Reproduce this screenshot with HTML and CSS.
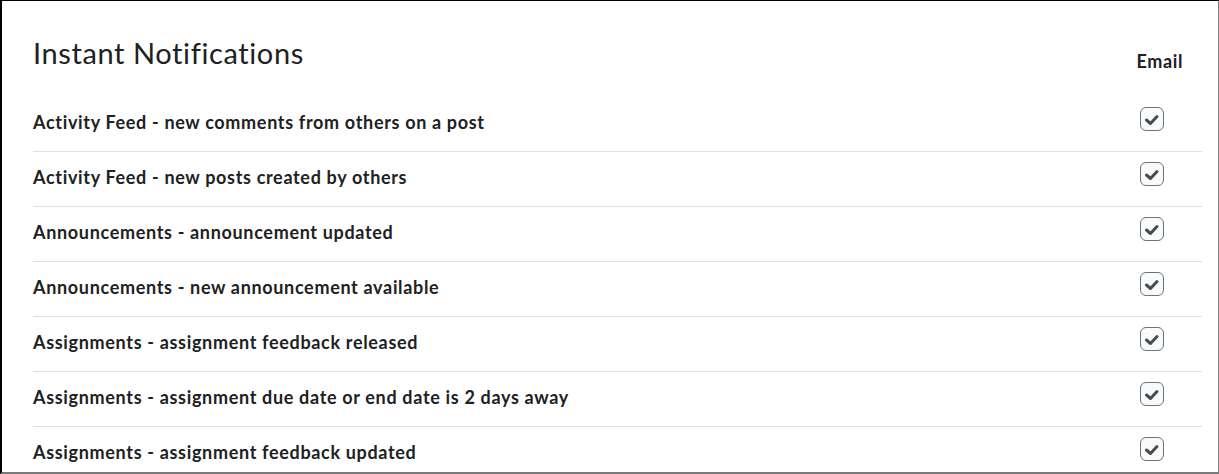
FILE: index.html
```html
<!DOCTYPE html>
<html lang="en">
<head>
    <meta charset="UTF-8">
    <meta name="viewport" content="width=device-width, initial-scale=1.0">
    <title>Instant Notifications</title>
    <link rel="stylesheet" href="styles.css">
</head>
<body>
    <div class="frame">
        <div class="header">
            <h1 class="title">Instant Notifications</h1>
            <div class="col-head">Email</div>
        </div>

        <div class="row">
            <div class="label">Activity Feed - new comments from others on a post</div>
            <div class="check"><svg viewBox="0 0 22 22"><polyline points="5.5,12 9.5,15.5 16,8.5"/></svg></div>
        </div>
        <div class="row">
            <div class="label">Activity Feed - new posts created by others</div>
            <div class="check"><svg viewBox="0 0 22 22"><polyline points="5.5,12 9.5,15.5 16,8.5"/></svg></div>
        </div>
        <div class="row">
            <div class="label">Announcements - announcement updated</div>
            <div class="check"><svg viewBox="0 0 22 22"><polyline points="5.5,12 9.5,15.5 16,8.5"/></svg></div>
        </div>
        <div class="row">
            <div class="label">Announcements - new announcement available</div>
            <div class="check"><svg viewBox="0 0 22 22"><polyline points="5.5,12 9.5,15.5 16,8.5"/></svg></div>
        </div>
        <div class="row">
            <div class="label">Assignments - assignment feedback released</div>
            <div class="check"><svg viewBox="0 0 22 22"><polyline points="5.5,12 9.5,15.5 16,8.5"/></svg></div>
        </div>
        <div class="row">
            <div class="label">Assignments - assignment due date or end date is 2 days away</div>
            <div class="check"><svg viewBox="0 0 22 22"><polyline points="5.5,12 9.5,15.5 16,8.5"/></svg></div>
        </div>
        <div class="row">
            <div class="label">Assignments - assignment feedback updated</div>
            <div class="check"><svg viewBox="0 0 22 22"><polyline points="5.5,12 9.5,15.5 16,8.5"/></svg></div>
        </div>
    </div>
</body>
</html>
```

FILE: styles.css
```css
html, body {
    margin: 0;
    background: #fff;
}
body {
    font-family: Lato, "Liberation Sans", sans-serif;
    color: #202122;
    letter-spacing: 0.6px;
}

.frame {
    box-sizing: border-box;
    height: 474px;
    overflow: hidden;
    border-top: 1px solid #000;
    border-left: 2px solid #000;
    border-right: 1px solid #7a7a7a;
    border-bottom: 2px solid #7a7a7a;
    padding: 0 16px 0 31px;
}

.header {
    box-sizing: border-box;
    height: 96px;
    padding-top: 34px;
    display: flex;
    justify-content: space-between;
    align-items: flex-start;
}
.title {
    margin: 0;
    font-size: 29px;
    font-weight: 400;
    line-height: normal;
}
.col-head {
    margin-top: 15px;
    margin-right: 19px;
    font-size: 18px;
    font-weight: 700;
}

.row {
    box-sizing: border-box;
    height: 55px;
    padding-top: 14px;
    border-bottom: 1px solid #dcdfe3;
    display: flex;
    justify-content: space-between;
    align-items: flex-start;
}
.label {
    font-size: 18px;
    font-weight: 700;
    letter-spacing: 0.67px;
}
.check {
    box-sizing: border-box;
    width: 24px;
    height: 24px;
    margin-top: -4px;
    margin-right: 38px;
    border: 1px solid #6f7478;
    border-radius: 6px;
    background: #f9fafb;
}
.check svg {
    display: block;
    width: 22px;
    height: 22px;
}
.check polyline {
    fill: none;
    stroke: #494c4e;
    stroke-width: 3;
    stroke-linecap: round;
    stroke-linejoin: round;
}
```
